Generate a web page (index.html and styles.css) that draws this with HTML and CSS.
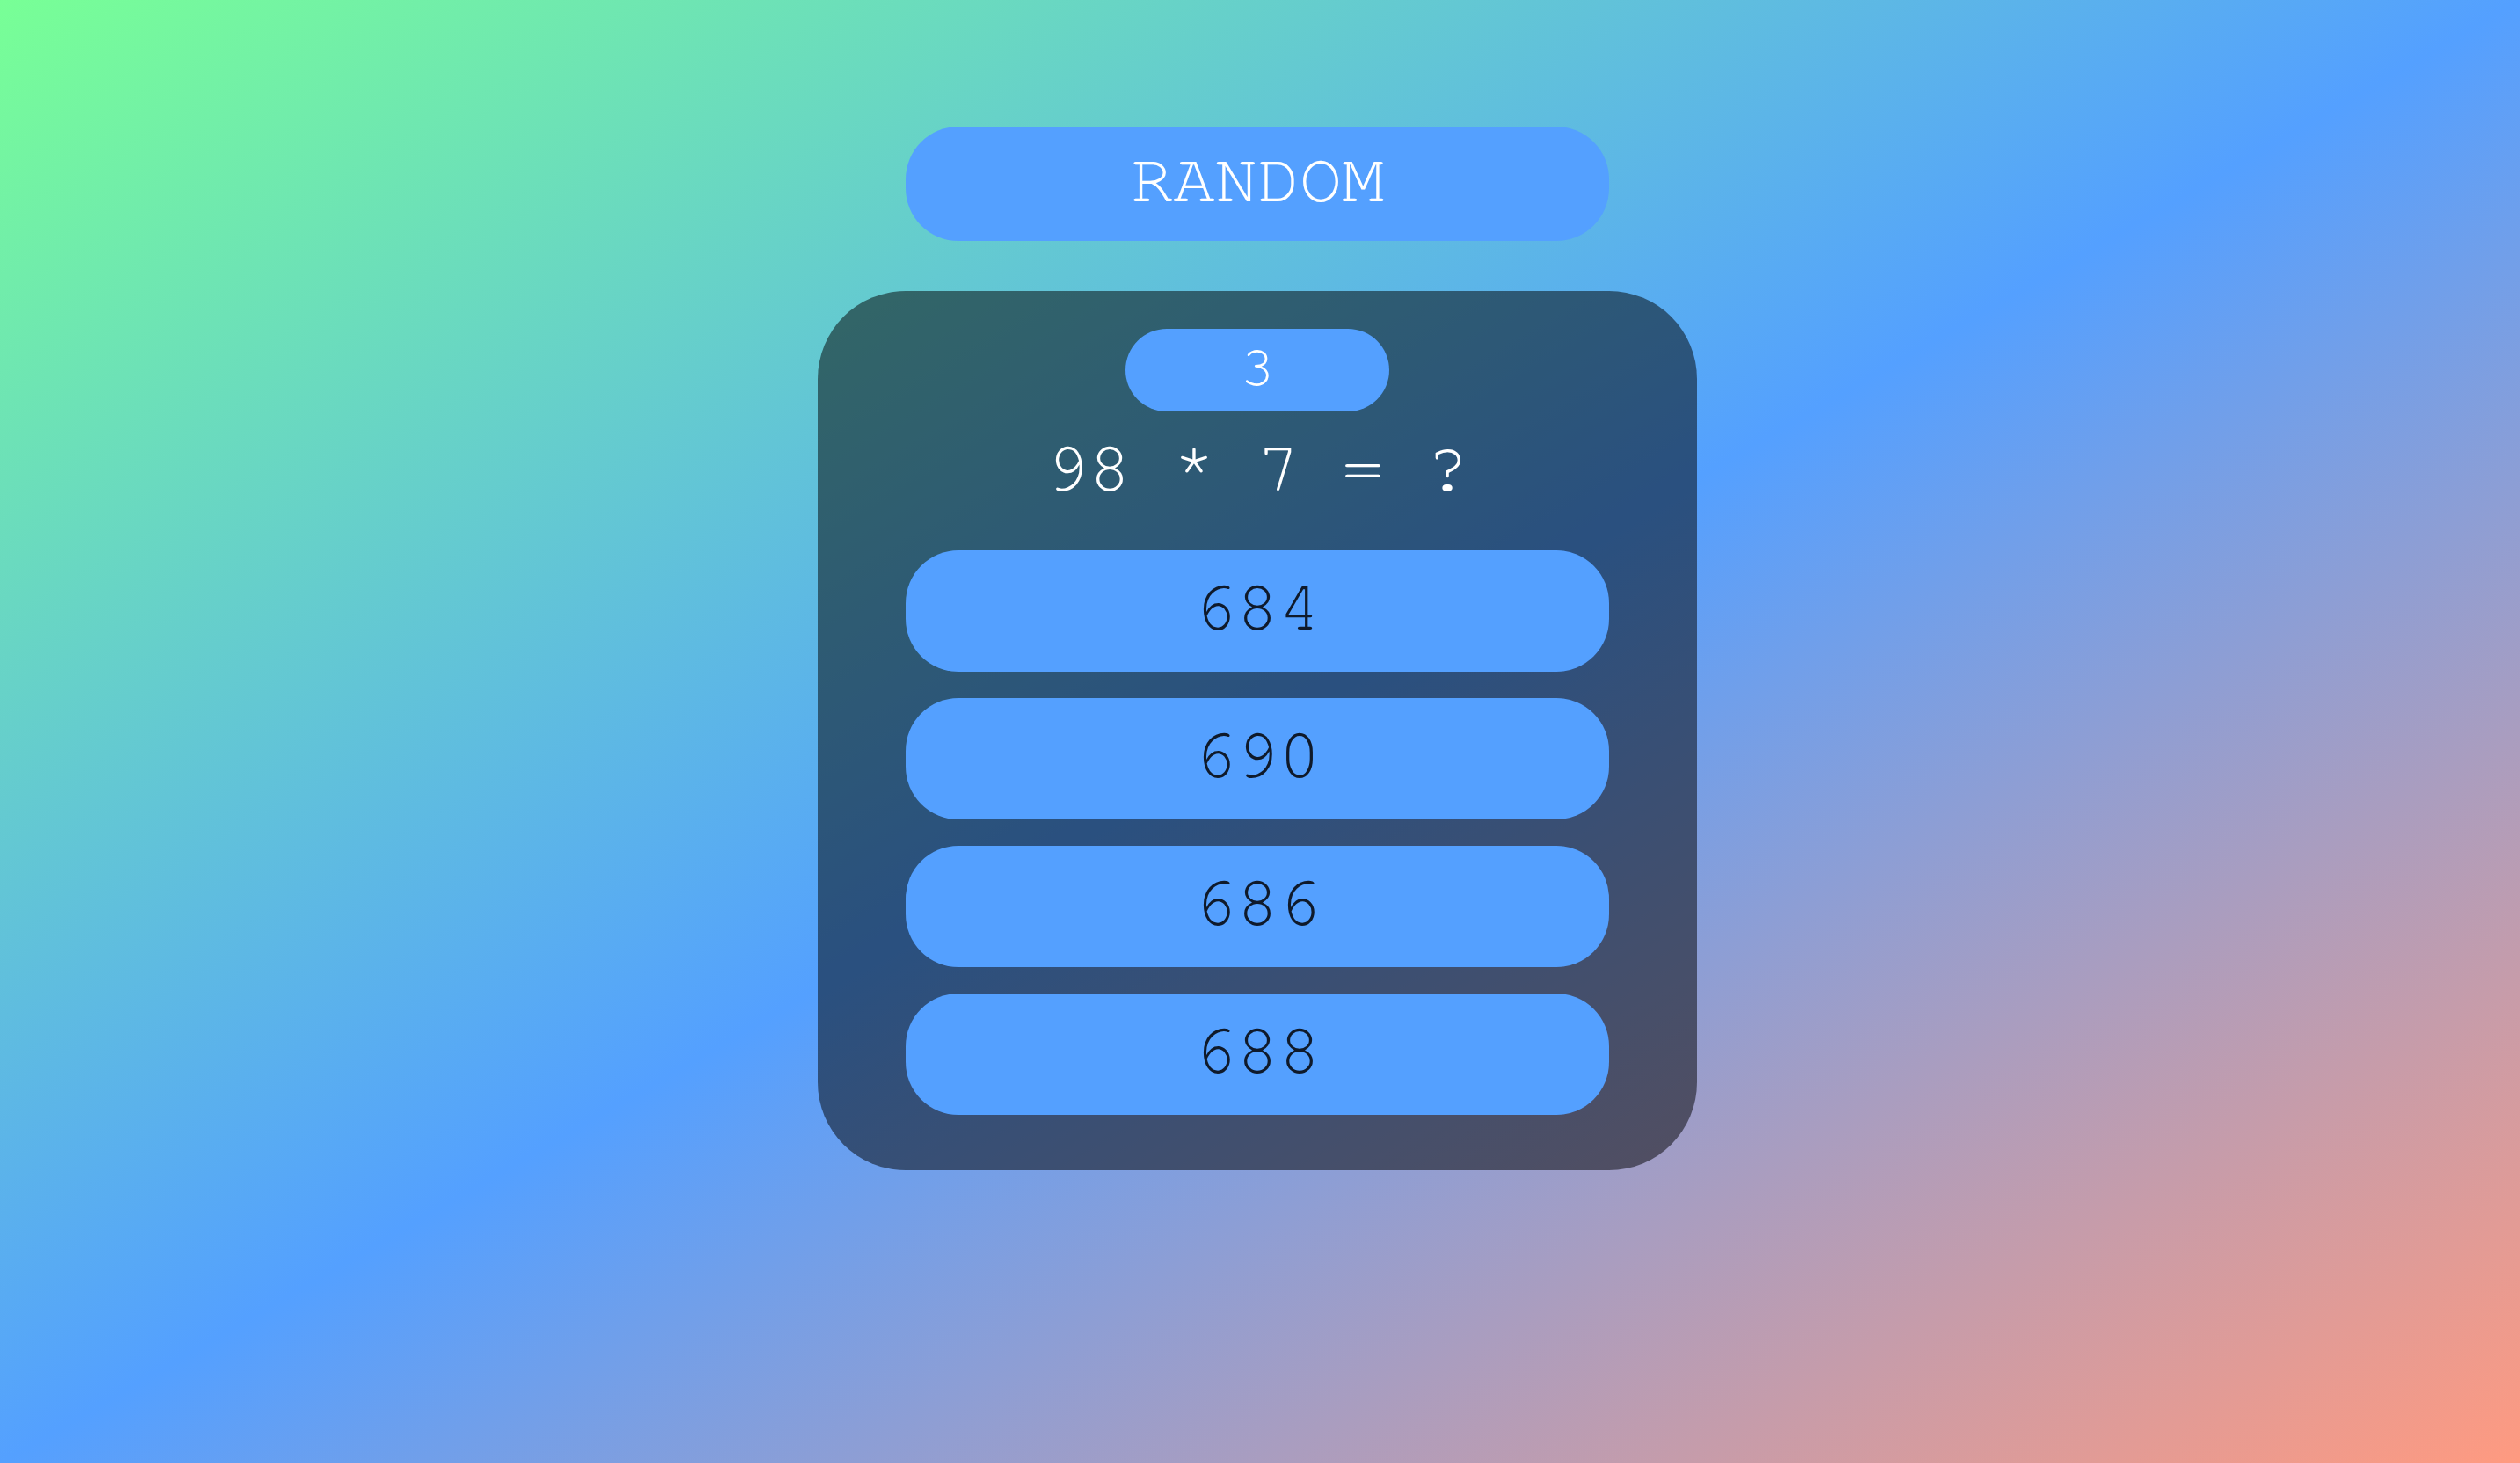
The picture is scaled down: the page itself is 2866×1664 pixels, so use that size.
FILE: index.html
```html
<!DOCTYPE html>
<html lang="en">
<head>
<meta charset="utf-8">
<title>Quiz</title>
<link rel="stylesheet" href="styles.css">
</head>
<body>
<main class="app">
  <button class="random-btn">RANDOM</button>
  <section class="card">
    <div class="counter">3</div>
    <div class="question">98 * 7 = ?</div>
    <div class="answers">
      <button class="answer">684</button>
      <button class="answer">690</button>
      <button class="answer">686</button>
      <button class="answer">688</button>
    </div>
  </section>
</main>
</body>
</html>
```

FILE: styles.css
```css
html, body {
  margin: 0;
  padding: 0;
  height: 100%;
}

body {
  background: linear-gradient(to bottom right, #78ff96 0%, #54a0ff 50%, #ff9a80 100%);
  font-family: "Nimbus Mono PS", "FreeMono", "Nimbus Mono L", "Courier 10 Pitch", Courier, "Liberation Mono", monospace;
  overflow: hidden;
}

.app {
  display: flex;
  flex-direction: column;
  align-items: center;
  padding-top: 144px;
  padding-right: 6px;
  gap: 57px;
}

.random-btn,
.answer {
  box-sizing: border-box;
  border: none;
  background: #54a0ff;
  font-family: inherit;
  font-size: 80px;
  padding: 0;
  margin: 0;
}

.random-btn {
  width: 800px;
  height: 130px;
  border-radius: 60px;
  color: #ffffff;
  line-height: 122px;
  padding-bottom: 8px;
}

.card {
  width: 1000px;
  height: 1000px;
  box-sizing: border-box;
  border-radius: 100px;
  background: rgba(0, 0, 0, 0.5);
  display: flex;
  flex-direction: column;
  align-items: center;
  padding: 43px 100px 0;
}

.counter {
  box-sizing: border-box;
  width: 300px;
  height: 94px;
  border-radius: 47px;
  background: #54a0ff;
  color: #ffffff;
  font-size: 64px;
  line-height: 90px;
  padding-bottom: 4px;
  text-align: center;
}

.question {
  margin-top: 26px;
  height: 80px;
  color: #ffffff;
  font-size: 80px;
  line-height: 80px;
  white-space: pre;
}

.answers {
  margin-top: 52px;
  display: flex;
  flex-direction: column;
  gap: 30px;
  width: 800px;
}

.answer {
  width: 800px;
  height: 138px;
  border-radius: 60px;
  color: #0f1a2b;
  line-height: 132px;
  padding-bottom: 6px;
}
```
